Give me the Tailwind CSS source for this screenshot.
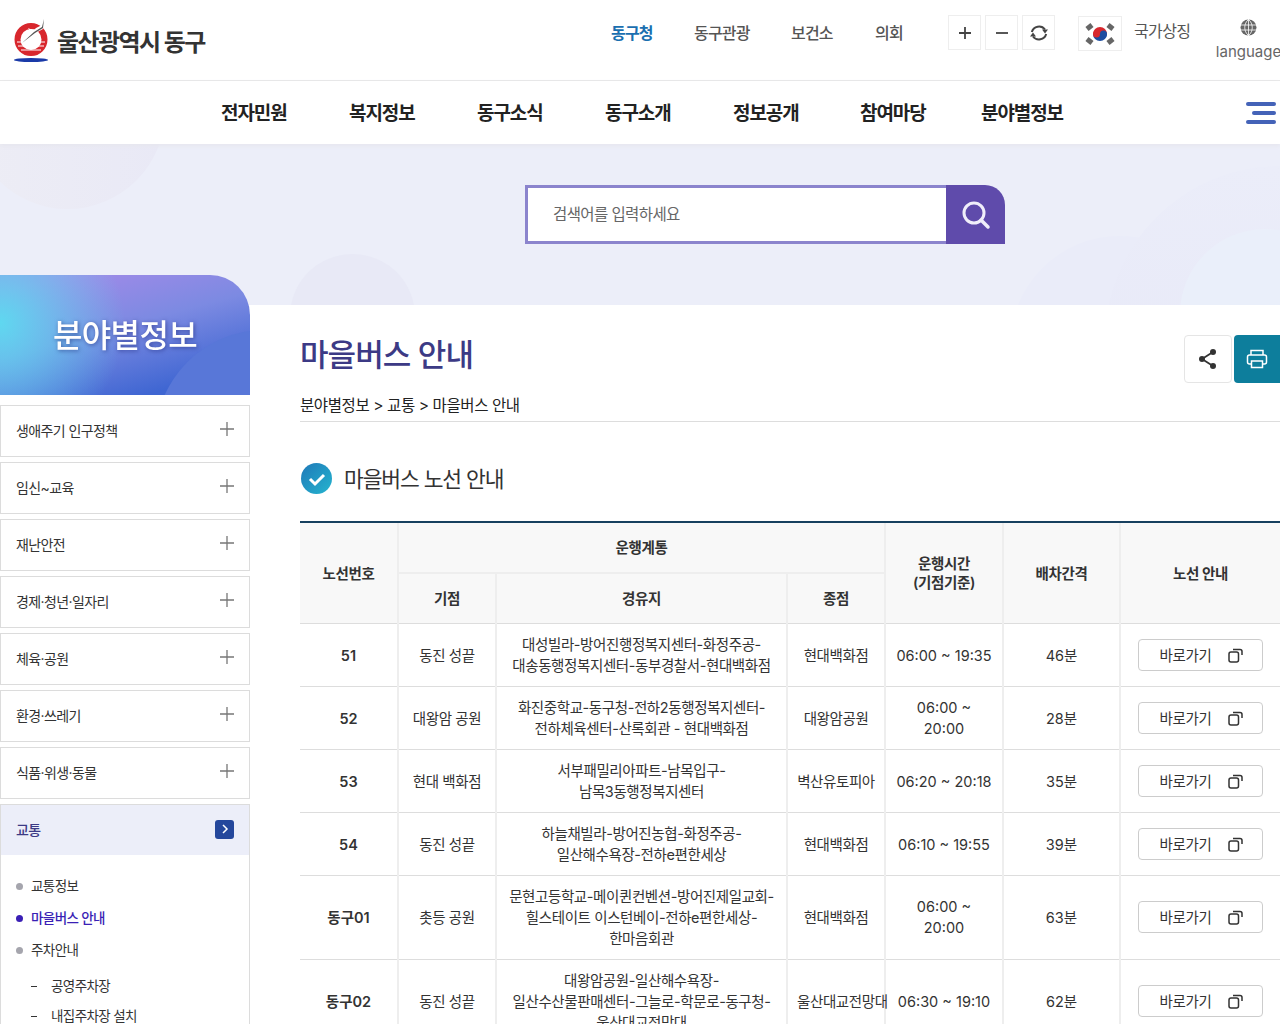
<!DOCTYPE html>
<html lang="ko">
<head>
    <meta charset="UTF-8">
    <title>마을버스 안내 - 울산광역시 동구</title>
    <script src="https://cdn.jsdelivr.net/npm/@tailwindcss/browser@4"></script>
</head>
<body class="h-[1024px] overflow-hidden bg-white text-[#333] font-['Inter','Noto_Sans_CJK_KR',sans-serif] tracking-[-0.6px]">

    <!-- Top bar -->
    <header class="relative h-[81px] border-b border-[#e8e8e8] flex">
        <a class="flex items-center pl-[14px] w-[611px]">
            <svg class="w-[35px] h-[44px]" viewBox="0 0 35 44">
                <circle cx="17" cy="21.500" r="13.500" fill="none" stroke="#d8272d" stroke-width="6"/>
                <path d="M3 24h28M4 28h26M7 32h20" stroke="#fff" stroke-width="1"/>
                <path d="M14 10q6 3 8 0l6-3 1 4-9 5-12 8 9-9z" fill="#fff"/>
                <path d="M8 25l13-10 8-5 1-9-2 8-8 5z" fill="#555"/>
                <ellipse cx="17" cy="42" rx="17" ry="2" fill="#1a3aa8"/>
            </svg>
            <span class="ml-[8px] mt-[5px] text-[24px] font-semibold text-[#333] tracking-[-1.600px] leading-none">울산광역시 동구</span>
        </a>
        <nav class="flex text-[16px] font-medium text-[#555] pt-[22px] h-fit leading-[22px] tracking-[-0.8px]">
            <a class="w-[41px] mr-[42px] text-[#1a6fb0] font-bold whitespace-nowrap">동구청</a>
            <a class="w-[56px] mr-[41px] whitespace-nowrap">동구관광</a>
            <a class="w-[42px] mr-[42px] whitespace-nowrap">보건소</a>
            <a class="w-[28px] whitespace-nowrap">의회</a>
        </nav>
        <div class="absolute left-[948px] top-[15px] flex gap-[4px]">
            <span class="w-[33px] h-[35px] border border-[#eee] flex items-center justify-center">
                <svg class="w-[14px] h-[14px]" viewBox="0 0 14 14"><path d="M7 1v12M1 7h12" stroke="#444" stroke-width="1.800"/></svg>
            </span>
            <span class="w-[33px] h-[35px] border border-[#eee] flex items-center justify-center">
                <svg class="w-[14px] h-[14px]" viewBox="0 0 14 14"><path d="M1 7h12" stroke="#444" stroke-width="1.800"/></svg>
            </span>
            <span class="w-[33px] h-[35px] border border-[#eee] flex items-center justify-center">
                <svg class="w-[20px] h-[20px]" viewBox="0 0 20 20">
                    <path d="M2.800 9A7.500 7.500 0 0 1 16 6.500M17.200 11A7.500 7.500 0 0 1 4 13.500" fill="none" stroke="#444" stroke-width="2"/>
                    <path d="M13 6.500h6l-3 4zM1 13.500h6l-3-4z" fill="#444"/>
                </svg>
            </span>
        </div>
        <span class="absolute left-[1078px] top-[16px] w-[44px] h-[35px] border border-[#eee] flex items-center justify-center">
            <svg class="w-[32px] h-[24px]" viewBox="0 0 32 24">
                <path d="M9 12a7 7 0 0 1 14 0z" fill="#d8272d"/><path d="M9 12a7 7 0 0 0 14 0z" fill="#1c4da1"/>
                <circle cx="12.500" cy="12" r="3.500" fill="#d8272d"/><circle cx="19.500" cy="12" r="3.500" fill="#1c4da1"/>
                <g stroke="#666" stroke-width="5">
                    <path d="M3 7l5-4M24 3l5 4M3 17l5 4M24 21l5-4"/>
                </g>
            </svg>
        </span>
        <span class="absolute left-[1134px] top-[20px] text-[16px] leading-[22px] text-[#555] whitespace-nowrap">국가상징</span>
        <div class="absolute left-[1217px] top-[19px] w-[63px] flex flex-col items-center text-[15px] leading-[20px] text-[#666] tracking-normal">
            <svg class="w-[17px] h-[17px]" viewBox="0 0 17 17">
                <circle cx="8.500" cy="8.500" r="8" fill="#666"/>
                <path d="M0 6h17M0 11h17M8.500 0v17M8.500 .5c-5 4-5 12 0 16M8.500 .5c5 4 5 12 0 16" stroke="#fff" stroke-width=".8" fill="none"/>
            </svg>
            <span class="mt-[6px]">language</span>
        </div>
    </header>

    <!-- Main nav -->
    <div class="relative z-10 h-[63px] flex items-center pl-[221px] pt-[4px] text-[19px] font-semibold text-[#222] tracking-[-1.100px] shadow-[0_2px_4px_#e6e6ee]">
        <a class="w-[128px]">전자민원</a>
        <a class="w-[128px]">복지정보</a>
        <a class="w-[128px]">동구소식</a>
        <a class="w-[128px]">동구소개</a>
        <a class="w-[127px]">정보공개</a>
        <a class="w-[121px]">참여마당</a>
        <a>분야별정보</a>
        <div class="absolute left-[1246px] top-[21px] w-[30px] flex flex-col gap-[5px]">
            <span class="h-[4px] rounded-full bg-[#4463b8]"></span>
            <span class="h-[4px] ml-[6px] rounded-full bg-[#4463b8]"></span>
            <span class="h-[4px] rounded-full bg-[#4463b8]"></span>
        </div>
    </div>

    <!-- Banner -->
    <div class="relative h-[161px] overflow-hidden bg-[#eceef9] pt-[41px] pl-[525px]">
        <div class="absolute left-[-30px] top-[-130px] w-[195px] h-[195px] rounded-full bg-[linear-gradient(90deg,#ededf5,#e9e9f6)]"></div>
        <div class="absolute left-[290px] top-[110px] w-[125px] h-[125px] rounded-full bg-[#e8e9f6]"></div>
        <div class="absolute left-[1010px] top-[92px] w-[220px] h-[220px] rounded-full bg-[#eaecf9]"></div>
        <div class="absolute left-[1105px] top-[22px] w-[350px] h-[350px] rounded-full bg-[linear-gradient(180deg,#ebedf9,#e6e7f7)]"></div>
        <div class="absolute left-[1180px] top-[85px] w-[170px] h-[170px] rounded-full bg-[#eaeffa]"></div>
        <div class="relative flex w-[480px] h-[59px]">
            <div class="flex-1 bg-white border-[3px] border-r-0 border-[#8b84cd] flex items-center pl-[25px] text-[15.500px] text-[#666]">검색어를 입력하세요</div>
            <button class="w-[59px] bg-[#5f4bab] rounded-tr-[20px] flex items-center justify-center">
                <svg class="w-[30px] h-[30px]" viewBox="0 0 30 30" fill="none" stroke="#f0eefa">
                    <circle cx="13" cy="13" r="10" stroke-width="3"/>
                    <path d="M20 20l7 7" stroke-width="3.500" stroke-linecap="round"/>
                </svg>
            </button>
        </div>
    </div>

    <div class="flex">
        <!-- Sidebar -->
        <aside class="relative w-[250px] shrink-0 mt-[-30px]">
            <div class="relative overflow-hidden h-[120px] rounded-tr-[40px] bg-[radial-gradient(circle_at_0%_40%,#5fd8f0_0%,rgba(95,216,240,0)_48%),linear-gradient(165deg,#a08ae8_10%,#7c8ae2_45%,#3f66d2_85%)] flex items-center justify-center pt-[2px]">
                <div class="absolute left-[155px] top-[55px] w-[220px] h-[220px] rounded-full bg-[#5877d8]"></div>
                <span class="relative text-[32px] font-medium text-white tracking-[-0.600px] drop-shadow-[1px_1px_2px_rgba(30,40,120,0.6)]">분야별정보</span>
            </div>
            <ul class="mt-[10px] flex flex-col gap-[5px] text-[14px] text-[#333]">
                <li class="h-[52px] border border-[#dcdcdc] flex items-center justify-between px-[15px] pb-[1px]">생애주기 인구정책
                    <svg class="w-[14px] h-[14px] mb-[3px]" viewBox="0 0 14 14"><path d="M7 0v14M0 7h14" stroke="#777" stroke-width="1.300"/></svg>
                </li>
                <li class="h-[52px] border border-[#dcdcdc] flex items-center justify-between px-[15px] pb-[1px]">임신~교육
                    <svg class="w-[14px] h-[14px] mb-[3px]" viewBox="0 0 14 14"><path d="M7 0v14M0 7h14" stroke="#777" stroke-width="1.300"/></svg>
                </li>
                <li class="h-[52px] border border-[#dcdcdc] flex items-center justify-between px-[15px] pb-[1px]">재난안전
                    <svg class="w-[14px] h-[14px] mb-[3px]" viewBox="0 0 14 14"><path d="M7 0v14M0 7h14" stroke="#777" stroke-width="1.300"/></svg>
                </li>
                <li class="h-[52px] border border-[#dcdcdc] flex items-center justify-between px-[15px] pb-[1px]">경제·청년·일자리
                    <svg class="w-[14px] h-[14px] mb-[3px]" viewBox="0 0 14 14"><path d="M7 0v14M0 7h14" stroke="#777" stroke-width="1.300"/></svg>
                </li>
                <li class="h-[52px] border border-[#dcdcdc] flex items-center justify-between px-[15px] pb-[1px]">체육·공원
                    <svg class="w-[14px] h-[14px] mb-[3px]" viewBox="0 0 14 14"><path d="M7 0v14M0 7h14" stroke="#777" stroke-width="1.300"/></svg>
                </li>
                <li class="h-[52px] border border-[#dcdcdc] flex items-center justify-between px-[15px] pb-[1px]">환경·쓰레기
                    <svg class="w-[14px] h-[14px] mb-[3px]" viewBox="0 0 14 14"><path d="M7 0v14M0 7h14" stroke="#777" stroke-width="1.300"/></svg>
                </li>
                <li class="h-[52px] border border-[#dcdcdc] flex items-center justify-between px-[15px] pb-[1px]">식품·위생·동물
                    <svg class="w-[14px] h-[14px] mb-[3px]" viewBox="0 0 14 14"><path d="M7 0v14M0 7h14" stroke="#777" stroke-width="1.300"/></svg>
                </li>
                <li class="border-x border-t border-[#dcdcdc]">
                    <div class="h-[50px] bg-[#eceef9] flex items-center justify-between px-[15px] pb-[2px] text-[#3c3a85] font-medium">교통
                        <span class="w-[19px] h-[19px] rounded-[3px] bg-[#24479c] flex items-center justify-center">
                            <svg class="w-[10px] h-[10px]" viewBox="0 0 10 10" fill="none"><path d="M3 1l4 4-4 4" stroke="#fff" stroke-width="1.500"/></svg>
                        </span>
                    </div>
                    <ul class="pt-[20px] pl-[15px] text-[13.500px] leading-[22px]">
                        <li class="flex items-center h-[22px] mb-[10px]"><span class="w-[7px] h-[7px] rounded-full bg-[#a5a5ad] mr-[8px]"></span>교통정보</li>
                        <li class="flex items-center h-[22px] mb-[10px] text-[#3a1fb5] font-medium"><span class="w-[7px] h-[7px] rounded-full bg-[#3a1fb5] mr-[8px]"></span>마을버스 안내</li>
                        <li class="flex items-center h-[22px] mb-[14px]"><span class="w-[7px] h-[7px] rounded-full bg-[#a5a5ad] mr-[8px]"></span>주차안내</li>
                        <li class="flex items-center h-[22px] mb-[8px] pl-[15px]"><span class="w-[6px] h-[1px] bg-[#333] mr-[14px]"></span>공영주차장</li>
                        <li class="flex items-center h-[22px] pl-[15px]"><span class="w-[6px] h-[1px] bg-[#333] mr-[14px]"></span>내집주차장 설치</li>
                    </ul>
                </li>
            </ul>
        </aside>

        <!-- Content -->
        <main class="flex-1 min-w-0 pl-[50px]">
            <div class="relative h-[117px] border-b border-[#ddd]">
                <h1 class="pt-[29px] text-[31px] leading-[42px] font-medium text-[#3c3a85] tracking-[-0.900px]">마을버스 안내</h1>
                <p class="mt-[19px] text-[15.500px] leading-[22px] text-[#222] tracking-[-0.400px]">분야별정보 &gt; 교통 &gt; 마을버스 안내</p>
                <div class="absolute right-0 top-[30px] flex gap-[2px]">
                    <span class="w-[48px] h-[48px] rounded-[4px] border border-[#e5e5e5] flex items-center justify-center">
                        <svg class="w-[22px] h-[22px]" viewBox="0 0 22 22" fill="#333">
                            <circle cx="16" cy="4" r="3"/><circle cx="5" cy="11" r="3"/><circle cx="16" cy="18" r="3"/>
                            <path d="M16 4L5 11l11 7" fill="none" stroke="#333" stroke-width="1.800"/>
                        </svg>
                    </span>
                    <span class="w-[46px] h-[48px] rounded-l-[4px] bg-[#0d7e9c] flex items-center justify-center">
                        <svg class="w-[22px] h-[20px]" viewBox="0 0 22 20" fill="none" stroke="#fff" stroke-width="1.500">
                            <path d="M5 6V1.500h12V6"/><rect x="1.500" y="6" width="19" height="9" rx="2"/><path d="M5.500 12h11v6.500h-11z" fill="#0d7e9c"/>
                        </svg>
                    </span>
                </div>
            </div>

            <div class="flex items-center h-[36px] mt-[38px] gap-[11px]">
                <svg class="w-[33px] h-[33px] shrink-0" viewBox="0 0 33 33">
                    <defs><linearGradient id="chk" x1="0" y1="0" x2="1" y2="1"><stop offset="0" stop-color="#1f78b8"/><stop offset="1" stop-color="#25b5cf"/></linearGradient></defs>
                    <circle cx="16.500" cy="16.500" r="15.500" fill="url(#chk)"/>
                    <path d="M10 17l5 5 9-9" fill="none" stroke="#fff" stroke-width="3"/>
                </svg>
                <h2 class="mt-[2px] text-[21.500px] text-[#333] tracking-[-1.100px]">마을버스 노선 안내</h2>
            </div>

            <div class="mt-[25px] w-[980px] border-t-2 border-[#17405f]">
            <table class="w-full table-fixed border-collapse text-[14.500px] text-center text-[#333] tracking-[-0.4px]">
                <colgroup>
                    <col class="w-[98px]"><col class="w-[98px]"><col class="w-[291px]"><col class="w-[98px]"><col class="w-[118px]"><col class="w-[117px]"><col class="w-[160px]">
                </colgroup>
                <thead class="bg-[#f8f8f8] font-semibold text-[#333]">
                    <tr class="h-[50px]">
                        <th rowspan="2" class="pt-[2px] font-semibold border-r-2 border-[#eee] border-b border-b-[#ddd]">노선번호</th>
                        <th colspan="3" class="font-semibold border-r-2 border-b-2 border-[#eee]">운행계통</th>
                        <th rowspan="2" class="font-semibold leading-[19px] border-r-2 border-[#eee] border-b border-b-[#ddd]">운행시간<br>(기점기준)</th>
                        <th rowspan="2" class="pt-[2px] font-semibold border-r-2 border-[#eee] border-b border-b-[#ddd]">배차간격</th>
                        <th rowspan="2" class="pt-[2px] font-semibold border-b border-[#ddd]">노선 안내</th>
                    </tr>
                    <tr class="h-[50px] [&>th]:pt-[2px]">
                        <th class="font-semibold border-r-2 border-[#eee] border-b border-b-[#ddd]">기점</th>
                        <th class="font-semibold border-r-2 border-[#eee] border-b border-b-[#ddd]">경유지</th>
                        <th class="font-semibold border-r-2 border-[#eee] border-b border-b-[#ddd]">종점</th>
                    </tr>
                </thead>
                <tbody class="leading-[21px]">
                    <tr class="h-[63px] border-b border-[#ddd] [&>td]:pt-[1px]">
                        <td class="font-semibold tracking-normal border-r-2 border-[#eee]">51</td>
                        <td class="border-r-2 border-[#eee]">동진 성끝</td>
                        <td class="border-r-2 border-[#eee]">대성빌라-방어진행정복지센터-화정주공-<br>대송동행정복지센터-동부경찰서-현대백화점</td>
                        <td class="border-r-2 border-[#eee]">현대백화점</td>
                        <td class="tracking-normal border-r-2 border-[#eee]">06:00 ~ 19:35</td>
                        <td class="tracking-normal border-r-2 border-[#eee]">46분</td>
                        <td><a class="mx-auto w-[125px] h-[32px] pl-[1px] rounded-[4px] border border-[#ccc] flex items-center justify-center gap-[16px] tracking-[-0.300px]">바로가기
                            <svg class="w-[15px] h-[15px]" viewBox="0 0 15 15" fill="none" stroke="#333" stroke-width="1.500"><rect x="1" y="4" width="9.500" height="10" rx="2"/><path d="M5 1.500h7a2 2 0 0 1 2 2V7"/></svg></a></td>
                    </tr>
                    <tr class="h-[63px] border-b border-[#ddd] [&>td]:pt-[1px]">
                        <td class="font-semibold tracking-normal border-r-2 border-[#eee]">52</td>
                        <td class="border-r-2 border-[#eee]">대왕암 공원</td>
                        <td class="border-r-2 border-[#eee]">화진중학교-동구청-전하2동행정복지센터-<br>전하체육센터-산록회관 - 현대백화점</td>
                        <td class="border-r-2 border-[#eee]">대왕암공원</td>
                        <td class="tracking-normal border-r-2 border-[#eee]">06:00 ~<br>20:00</td>
                        <td class="tracking-normal border-r-2 border-[#eee]">28분</td>
                        <td><a class="mx-auto w-[125px] h-[32px] pl-[1px] rounded-[4px] border border-[#ccc] flex items-center justify-center gap-[16px] tracking-[-0.300px]">바로가기
                            <svg class="w-[15px] h-[15px]" viewBox="0 0 15 15" fill="none" stroke="#333" stroke-width="1.500"><rect x="1" y="4" width="9.500" height="10" rx="2"/><path d="M5 1.500h7a2 2 0 0 1 2 2V7"/></svg></a></td>
                    </tr>
                    <tr class="h-[63px] border-b border-[#ddd] [&>td]:pt-[1px]">
                        <td class="font-semibold tracking-normal border-r-2 border-[#eee]">53</td>
                        <td class="border-r-2 border-[#eee]">현대 백화점</td>
                        <td class="border-r-2 border-[#eee]">서부패밀리아파트-남목입구-<br>남목3동행정복지센터</td>
                        <td class="border-r-2 border-[#eee] whitespace-nowrap">벽산유토피아</td>
                        <td class="tracking-normal border-r-2 border-[#eee]">06:20 ~ 20:18</td>
                        <td class="tracking-normal border-r-2 border-[#eee]">35분</td>
                        <td><a class="mx-auto w-[125px] h-[32px] pl-[1px] rounded-[4px] border border-[#ccc] flex items-center justify-center gap-[16px] tracking-[-0.300px]">바로가기
                            <svg class="w-[15px] h-[15px]" viewBox="0 0 15 15" fill="none" stroke="#333" stroke-width="1.500"><rect x="1" y="4" width="9.500" height="10" rx="2"/><path d="M5 1.500h7a2 2 0 0 1 2 2V7"/></svg></a></td>
                    </tr>
                    <tr class="h-[63px] border-b border-[#ddd] [&>td]:pt-[1px]">
                        <td class="font-semibold tracking-normal border-r-2 border-[#eee]">54</td>
                        <td class="border-r-2 border-[#eee]">동진 성끝</td>
                        <td class="border-r-2 border-[#eee]">하늘채빌라-방어진농협-화정주공-<br>일산해수욕장-전하e편한세상</td>
                        <td class="border-r-2 border-[#eee]">현대백화점</td>
                        <td class="tracking-normal border-r-2 border-[#eee]">06:10 ~ 19:55</td>
                        <td class="tracking-normal border-r-2 border-[#eee]">39분</td>
                        <td><a class="mx-auto w-[125px] h-[32px] pl-[1px] rounded-[4px] border border-[#ccc] flex items-center justify-center gap-[16px] tracking-[-0.300px]">바로가기
                            <svg class="w-[15px] h-[15px]" viewBox="0 0 15 15" fill="none" stroke="#333" stroke-width="1.500"><rect x="1" y="4" width="9.500" height="10" rx="2"/><path d="M5 1.500h7a2 2 0 0 1 2 2V7"/></svg></a></td>
                    </tr>
                    <tr class="h-[84px] border-b border-[#ddd]">
                        <td class="font-semibold tracking-normal border-r-2 border-[#eee]">동구01</td>
                        <td class="border-r-2 border-[#eee]">촛등 공원</td>
                        <td class="border-r-2 border-[#eee]">문현고등학교-메이퀸컨벤션-방어진제일교회-<br>힐스테이트 이스턴베이-전하e편한세상-<br>한마음회관</td>
                        <td class="border-r-2 border-[#eee]">현대백화점</td>
                        <td class="tracking-normal border-r-2 border-[#eee]">06:00 ~<br>20:00</td>
                        <td class="tracking-normal border-r-2 border-[#eee]">63분</td>
                        <td><a class="mx-auto w-[125px] h-[32px] pl-[1px] rounded-[4px] border border-[#ccc] flex items-center justify-center gap-[16px] tracking-[-0.300px]">바로가기
                            <svg class="w-[15px] h-[15px]" viewBox="0 0 15 15" fill="none" stroke="#333" stroke-width="1.500"><rect x="1" y="4" width="9.500" height="10" rx="2"/><path d="M5 1.500h7a2 2 0 0 1 2 2V7"/></svg></a></td>
                    </tr>
                    <tr class="h-[84px] border-b border-[#ddd]">
                        <td class="font-semibold tracking-normal border-r-2 border-[#eee]">동구02</td>
                        <td class="border-r-2 border-[#eee]">동진 성끝</td>
                        <td class="border-r-2 border-[#eee]">대왕암공원-일산해수욕장-<br>일산수산물판매센터-그늘로-학문로-동구청-<br>울산대교전망대</td>
                        <td class="border-r-2 border-[#eee] whitespace-nowrap text-left pl-[9px]">울산대교전망대</td>
                        <td class="tracking-normal border-r-2 border-[#eee]">06:30 ~ 19:10</td>
                        <td class="tracking-normal border-r-2 border-[#eee]">62분</td>
                        <td><a class="mx-auto w-[125px] h-[32px] pl-[1px] rounded-[4px] border border-[#ccc] flex items-center justify-center gap-[16px] tracking-[-0.300px]">바로가기
                            <svg class="w-[15px] h-[15px]" viewBox="0 0 15 15" fill="none" stroke="#333" stroke-width="1.500"><rect x="1" y="4" width="9.500" height="10" rx="2"/><path d="M5 1.500h7a2 2 0 0 1 2 2V7"/></svg></a></td>
                    </tr>
                </tbody>
            </table>
            </div>
        </main>
    </div>
</body>
</html>
